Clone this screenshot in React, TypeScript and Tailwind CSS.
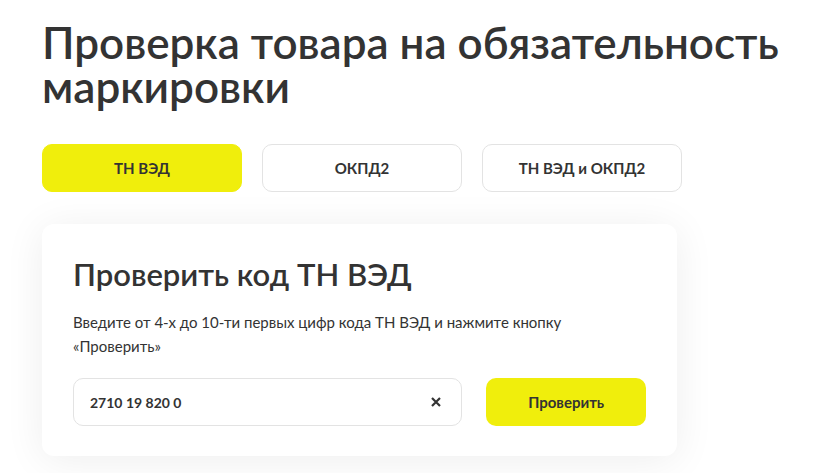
import { useState } from "react";

const tabs = ["ТН ВЭД", "ОКПД2", "ТН ВЭД и ОКПД2"];

export default function App() {
  const [active, setActive] = useState(0);
  const [code, setCode] = useState("2710 19 820 0");

  return (
    <div
      className="min-h-screen bg-white px-[42px] pt-[20px] text-[#333333]"
      style={{ fontFamily: "Lato, 'Noto Sans', sans-serif" }}
    >
      <h1 className="w-[760px] text-[44px] font-semibold leading-[44px]">
        Проверка товара на обязательность маркировки
      </h1>

      {/* Табы */}
      <div className="mt-[36px] flex gap-5">
        {tabs.map((t, i) => (
          <button
            key={t}
            onClick={() => setActive(i)}
            className={
              i === active
                ? "h-12 w-[200px] rounded-[10px] border border-[#f0ee0c] bg-[#f0ee0c] text-[15px] font-bold"
                : "h-12 w-[200px] rounded-[10px] border border-[#e3e3e3] bg-white text-[15px] font-bold"
            }
          >
            {t}
          </button>
        ))}
      </div>

      {/* Карточка */}
      <div className="mt-8 w-[635px] rounded-[12px] bg-white px-[31px] pb-[30px] pt-[28px] shadow-[0_4px_40px_rgba(0,0,0,0.07)]">
        <h2 className="text-[31px] font-semibold leading-[44px]">Проверить код ТН ВЭД</h2>
        <p className="mt-[14px] w-[520px] text-[15px] leading-[24px]">
          Введите от 4-х до 10-ти первых цифр кода ТН ВЭД и нажмите кнопку «Проверить»
        </p>
        <div className="mt-[20px] flex gap-6">
          <div className="flex h-12 w-[390px] items-center rounded-[10px] border border-[#e3e3e3] pl-4 pr-5">
            <input
              value={code}
              onChange={(e) => setCode(e.target.value)}
              className="flex-1 bg-transparent text-[14px] font-bold outline-none"
            />
            <button onClick={() => setCode("")} className="text-[#333]">
              <svg width="10" height="10" viewBox="0 0 10 10" stroke="currentColor" strokeWidth="2.2">
                <path d="M1 1l8 8M9 1l-8 8" />
              </svg>
            </button>
          </div>
          <button className="h-12 w-[160px] rounded-[10px] bg-[#f0ee0c] text-[15px] font-bold">
            Проверить
          </button>
        </div>
      </div>
    </div>
  );
}
